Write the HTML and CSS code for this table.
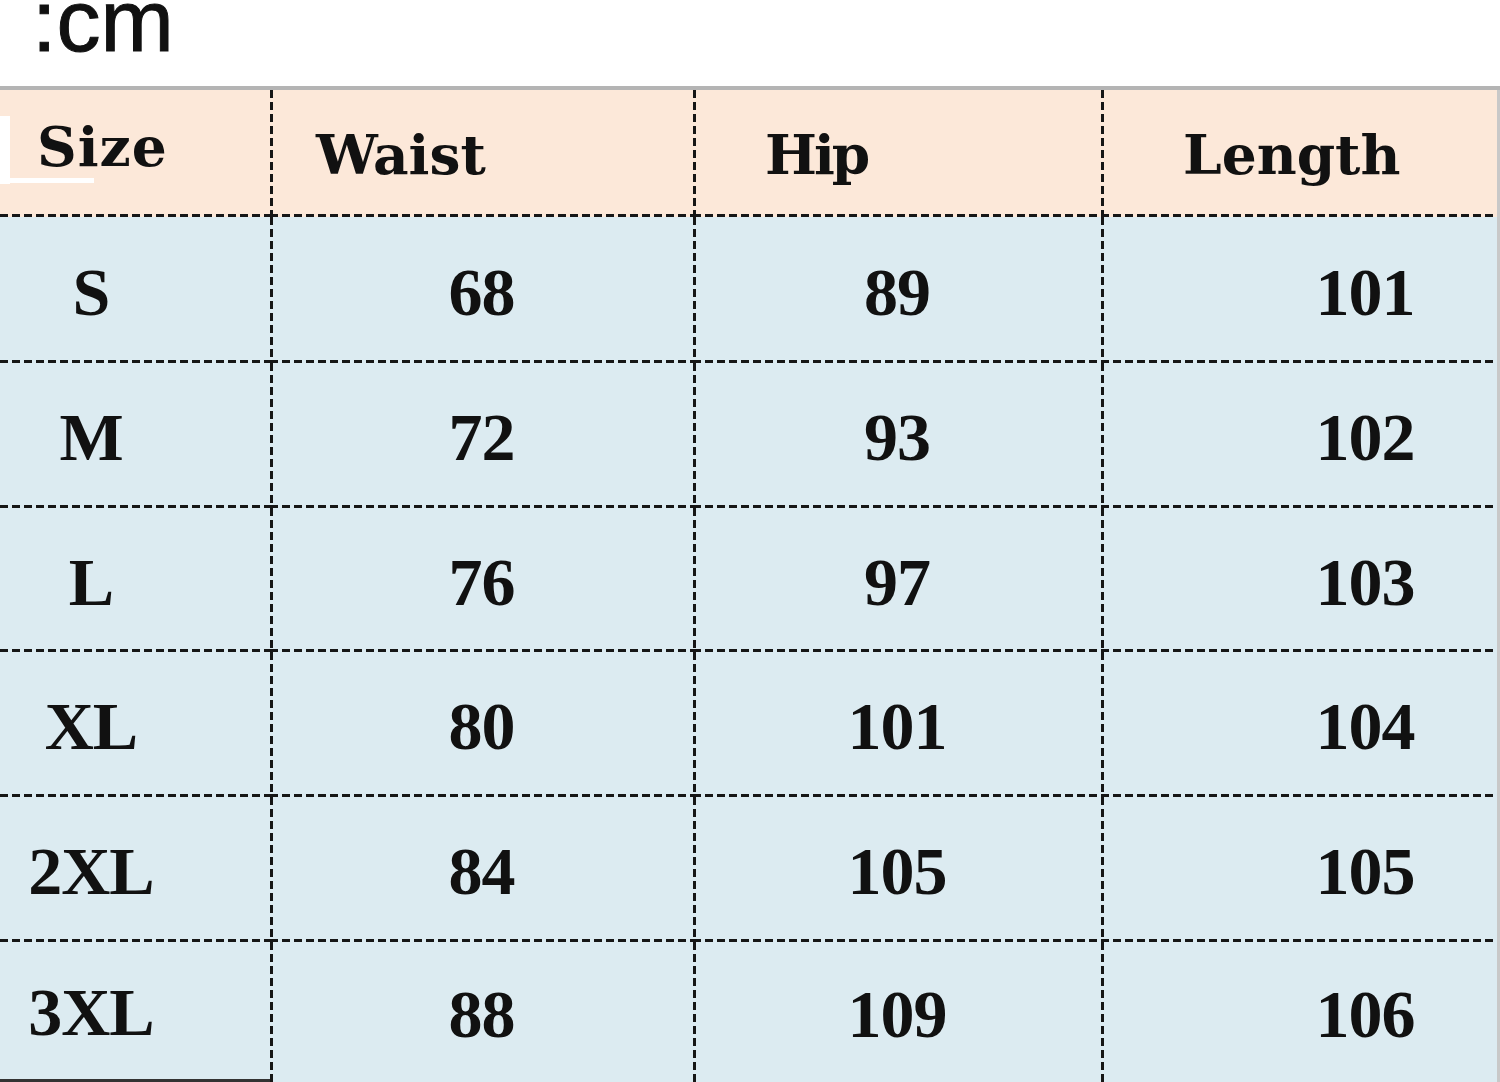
FILE: index.html
```html
<!DOCTYPE html>
<html>
<head>
<meta charset="utf-8">
<link rel="stylesheet" href="styles.css">
</head>
<body>
<div class="unit">:cm</div>
<div class="table">
  <div class="cell head c1"><span class="ht h-size">Size</span><span class="mark"></span></div>
  <div class="cell head c2"><span class="ht h-waist">Waist</span></div>
  <div class="cell head c3"><span class="ht h-hip">Hip</span></div>
  <div class="cell head c4"><span class="ht h-len">Length</span></div>

  <div class="cell body c1 sz">S</div><div class="cell body c2">68</div><div class="cell body c3">89</div><div class="cell body c4 ln">101</div>
  <div class="cell body c1 sz">M</div><div class="cell body c2">72</div><div class="cell body c3">93</div><div class="cell body c4 ln">102</div>
  <div class="cell body c1 sz">L</div><div class="cell body c2">76</div><div class="cell body c3">97</div><div class="cell body c4 ln">103</div>
  <div class="cell body c1 sz">XL</div><div class="cell body c2">80</div><div class="cell body c3">101</div><div class="cell body c4 ln">104</div>
  <div class="cell body c1 sz">2XL</div><div class="cell body c2">84</div><div class="cell body c3">105</div><div class="cell body c4 ln">105</div>
  <div class="cell body c1 sz last first-last">3XL</div><div class="cell body c2 last">88</div><div class="cell body c3 last">109</div><div class="cell body c4 ln last">106</div>
</div>
</body>
</html>
```
FILE: styles.css
```css
html, body {
  margin: 0;
  padding: 0;
  background: #ffffff;
  width: 1500px;
  height: 1082px;
  overflow: hidden;
}
.unit {
  font-family: "Liberation Sans", Arial, sans-serif;
  font-size: 88px;
  line-height: 86px;
  margin-top: -22px;
  padding-left: 32px;
  color: #111;
  height: 108px;
  -webkit-text-stroke: 1px #111;
}
.table {
  display: grid;
  grid-template-columns: 270px 423px 408px 399px;
  grid-template-rows: 127px 146px 145px 144px 145px 145px 141px;
  border-top: 4px solid #b4b4b4;
}
.cell {
  box-sizing: border-box;
  display: flex;
  align-items: center;
  color: #111;
  position: relative;
  --dash-h: repeating-linear-gradient(to right, #161616 0 8px, transparent 8px 12px);
  --dash-v: repeating-linear-gradient(to bottom, #161616 0 8px, transparent 8px 12px);
  background-image: var(--dash-h);
  background-size: 100% 3px;
  background-position: left bottom;
  background-repeat: no-repeat;
}
.c2, .c3, .c4 {
  background-image: var(--dash-h), var(--dash-v);
  background-size: 100% 3px, 3px 100%;
  background-position: left bottom, left top;
  background-repeat: no-repeat, no-repeat;
}
.c4 {
  border-right: 3px solid #c8c8c8;
}
.head {
  background-color: #fce8d9;
}
.body {
  background-color: #dcebf1;
  font-family: "Liberation Serif", "Times New Roman", serif;
  font-weight: bold;
  font-size: 68px;
  letter-spacing: -1px;
  justify-content: center;
  padding-top: 4px;
}
.sz {
  padding-right: 88px;
}
.ln {
  padding-left: 132px;
}
.c1.last {
  background-image: none;
  border-bottom: 4px solid #333;
}
.c2.last, .c3.last, .c4.last {
  background-image: var(--dash-v);
  background-size: 3px 100%;
  background-position: left top;
}
.ht {
  font-family: "DejaVu Serif", "Liberation Serif", serif;
  font-weight: bold;
  font-size: 55px;
  display: inline-block;
}
.h-size { margin-left: 37px; margin-top: -14px; letter-spacing: 1px; }
.h-waist { margin-left: 46px; margin-top: 2px; }
.h-hip { margin-left: 72px; margin-top: 2px; letter-spacing: -3px; }
.h-len { margin-left: 82px; margin-top: 2px; }
.mark {
  position: absolute;
  left: 0;
  top: 26px;
  width: 10px;
  height: 68px;
  background: #ffffff;
}
.mark::after {
  content: "";
  position: absolute;
  left: 10px;
  top: 62px;
  width: 84px;
  height: 5px;
  background: #ffffff;
}
```
